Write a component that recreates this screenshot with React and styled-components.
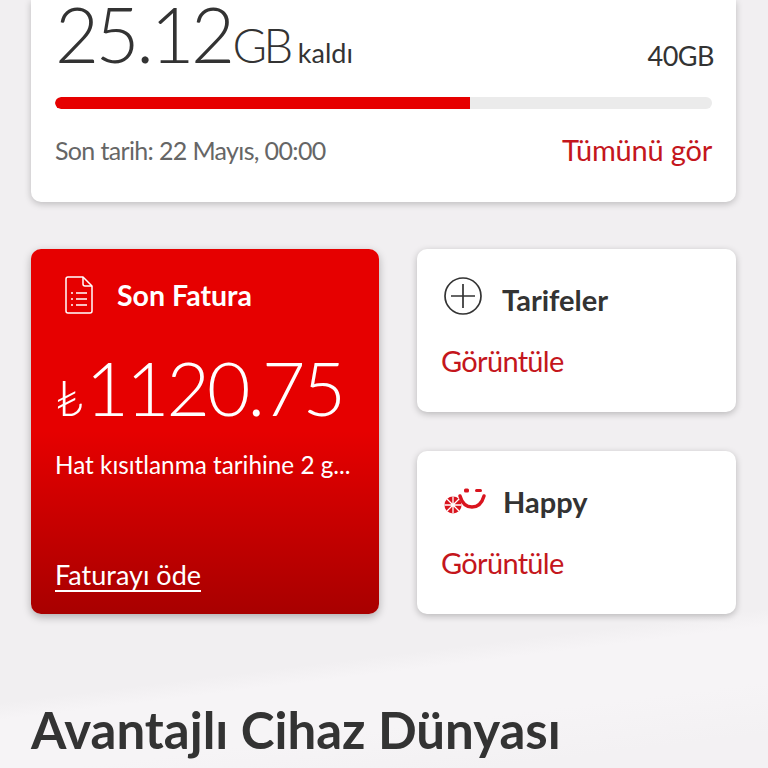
import styled, { createGlobalStyle } from 'styled-components'

const GlobalStyle = createGlobalStyle`
  html, body {
    margin: 0;
    padding: 0;
    background: #f2f0f2;
  }
  * {
    box-sizing: border-box;
  }
`

function FileIcon() {
  return (
    <svg width="30" height="40" viewBox="0 0 30 40" fill="none" stroke="#fff" strokeWidth="1.5">
      <path d="M4 2h15l9 9v25a2 2 0 0 1-2 2H4a2 2 0 0 1-2-2V4a2 2 0 0 1 2-2z" strokeLinejoin="round" />
      <path d="M19 2v7a2 2 0 0 0 2 2h7" />
      <path d="M7 18h2M12 18h11M7 24h2M12 24h11M7 30h2M12 30h11" />
    </svg>
  )
}

function PlusIcon() {
  return (
    <PlusSvg width="38" height="38" viewBox="0 0 38 38" fill="none" stroke="#333" strokeWidth="1.7">
      <circle cx="19" cy="19" r="18" />
      <path d="M19 7v24M7 19h24" />
    </PlusSvg>
  )
}

function HappyIcon() {
  return (
    <svg width="42" height="28" viewBox="0 0 42 28">
      <circle cx="9" cy="18" r="8.5" fill="#d9141e" />
      <path d="M9 9.5v17M.5 18h17M3 12l12 12M15 12L3 24" stroke="#fff" strokeWidth="1.3" />
      <path d="M16 9c2 7 6 11 12 11s10-4 12-11" fill="none" stroke="#d9141e" strokeWidth="3.4" strokeLinecap="round" />
      <rect x="20" y="1.5" width="5" height="4" rx="1.5" fill="#d9141e" />
      <rect x="31" y="2" width="7" height="3" rx="1.5" fill="#d9141e" />
    </svg>
  )
}

function ShortcutCard({ icon, title, gap }) {
  return (
    <SmallCard>
      <SmallHead $gap={gap}>
        {icon}
        <SmallTitle>{title}</SmallTitle>
      </SmallHead>
      <RedLink>Görüntüle</RedLink>
    </SmallCard>
  )
}

export default function App() {
  return (
    <Page>
      <GlobalStyle />
      <UsageCard>
        <UsageRow>
          <Amount>
            <Big>25.12</Big>
            <Unit>GB</Unit>
            <Left>kaldı</Left>
          </Amount>
          <Total>40GB</Total>
        </UsageRow>
        <Track>
          <Fill style={{ width: `${(25.12 / 40) * 100 + 0.4}%` }} />
        </Track>
        <UsageFoot>
          <DueDate>Son tarih: 22 Mayıs, 00:00</DueDate>
          <SeeAll>Tümünü gör</SeeAll>
        </UsageFoot>
      </UsageCard>
      <Grid>
        <BillCard>
          <BillHead>
            <FileIcon />
            <BillTitle>Son Fatura</BillTitle>
          </BillHead>
          <BillAmount>
            <Lira>₺</Lira>
            <BillNumber>1120.75</BillNumber>
          </BillAmount>
          <BillNote>Hat kısıtlanma tarihine 2 g...</BillNote>
          <PayLink>Faturayı öde</PayLink>
        </BillCard>
        <ShortcutCard icon={<PlusIcon />} title="Tarifeler" gap={20} />
        <ShortcutCard icon={<HappyIcon />} title="Happy" gap={17} />
      </Grid>
      <Heading>Avantajlı Cihaz Dünyası</Heading>
    </Page>
  )
}

const sans = `'Lato', 'Noto Sans', sans-serif`

const Page = styled.div`
  width: 768px;
  height: 768px;
  overflow: hidden;
  padding: 0 31px;
  font-family: ${sans};
  color: #333;
  background:
    linear-gradient(173deg, transparent 0 81.5%, #f6f4f6 83.5% 90%, #f3f1f3 96%),
    #f1eff1;
`

const UsageCard = styled.section`
  width: 705px;
  height: 202px;
  padding: 0 24px;
  background: #fff;
  border-radius: 0 0 10px 10px;
  box-shadow: 0 2px 7px rgba(0, 0, 0, 0.22);
`

const UsageRow = styled.div`
  display: flex;
  justify-content: space-between;
  align-items: flex-end;
  height: 77px;
`

const Amount = styled.div`
  display: flex;
  align-items: baseline;
  align-self: flex-start;
  line-height: 67px;
`

const Big = styled.span`
  font-size: 76px;
  font-weight: 300;
  letter-spacing: -3.5px;
  color: #333;
`

const Unit = styled.span`
  font-size: 47px;
  font-weight: 300;
  letter-spacing: -3.5px;
  margin-left: 1px;
`

const Left = styled.span`
  font-size: 27px;
  margin-left: 8px;
`

const Total = styled.span`
  font-size: 27px;
  line-height: 30px;
  letter-spacing: -0.5px;
  margin-bottom: 6px;
  margin-right: -2px;
`

const Track = styled.div`
  height: 12px;
  margin-top: 20px;
  background: #ebebeb;
  border-radius: 6px;
  overflow: hidden;
`

const Fill = styled.div`
  height: 100%;
  background: #e60000;
  border-radius: 6px 0 0 6px;
`

const UsageFoot = styled.div`
  display: flex;
  justify-content: space-between;
  align-items: center;
  margin-top: 24px;
`

const DueDate = styled.span`
  font-size: 25px;
  line-height: 34px;
  letter-spacing: -0.65px;
  color: #666;
`

const SeeAll = styled.a`
  font-size: 29px;
  line-height: 34px;
  letter-spacing: -0.2px;
  color: #c4161c;
`

const Grid = styled.div`
  display: grid;
  grid-template-columns: 348px 319px;
  grid-template-rows: 163px 163px;
  column-gap: 38px;
  row-gap: 39px;
  margin-top: 47px;
`

const BillCard = styled.section`
  grid-row: 1 / span 2;
  display: flex;
  flex-direction: column;
  padding: 26px 24px 22px;
  color: #fff;
  border-radius: 10px;
  background: linear-gradient(180deg, #e60000 0%, #e60000 50%, #a80000 100%);
  box-shadow: 0 3px 8px rgba(0, 0, 0, 0.28);
`

const BillHead = styled.div`
  display: flex;
  align-items: center;
  gap: 23px;
  margin-left: 9px;
`

const BillTitle = styled.h2`
  margin: 0;
  font-size: 28.5px;
  font-weight: 700;
`

const BillAmount = styled.div`
  display: flex;
  align-items: baseline;
  margin-top: 36px;
  line-height: 72px;
`

const Lira = styled.span`
  font-size: 50px;
  font-weight: 300;
`

const BillNumber = styled.span`
  font-size: 75px;
  font-weight: 300;
  letter-spacing: -3px;
  margin-left: 1.5px;
`

const BillNote = styled.p`
  margin: 16px 0 0;
  font-size: 24.3px;
  line-height: 32px;
  white-space: nowrap;
`

const PayLink = styled.a`
  margin-top: auto;
  align-self: flex-start;
  font-size: 27px;
  line-height: 30px;
  border-bottom: 2px solid #fff;
`

const SmallCard = styled.section`
  display: flex;
  flex-direction: column;
  justify-content: space-between;
  padding: 30px 24px 34px;
  background: #fff;
  border-radius: 10px;
  box-shadow: 0 2px 7px rgba(0, 0, 0, 0.24);
`

const SmallHead = styled.div`
  display: flex;
  align-items: center;
  gap: ${({ $gap }) => $gap}px;
  height: 40px;
  margin-left: 3px;
`

const PlusSvg = styled.svg`
  margin-bottom: 7px;
`

const SmallTitle = styled.h3`
  margin: 0;
  font-size: 29px;
  font-weight: 700;
  color: #333;
`

const RedLink = styled.a`
  font-size: 29px;
  line-height: 34px;
  letter-spacing: -0.7px;
  color: #c4161c;
`

const Heading = styled.h1`
  margin: 88px 0 0;
  font-size: 51px;
  line-height: 56px;
  font-weight: 700;
  color: #333;
`
